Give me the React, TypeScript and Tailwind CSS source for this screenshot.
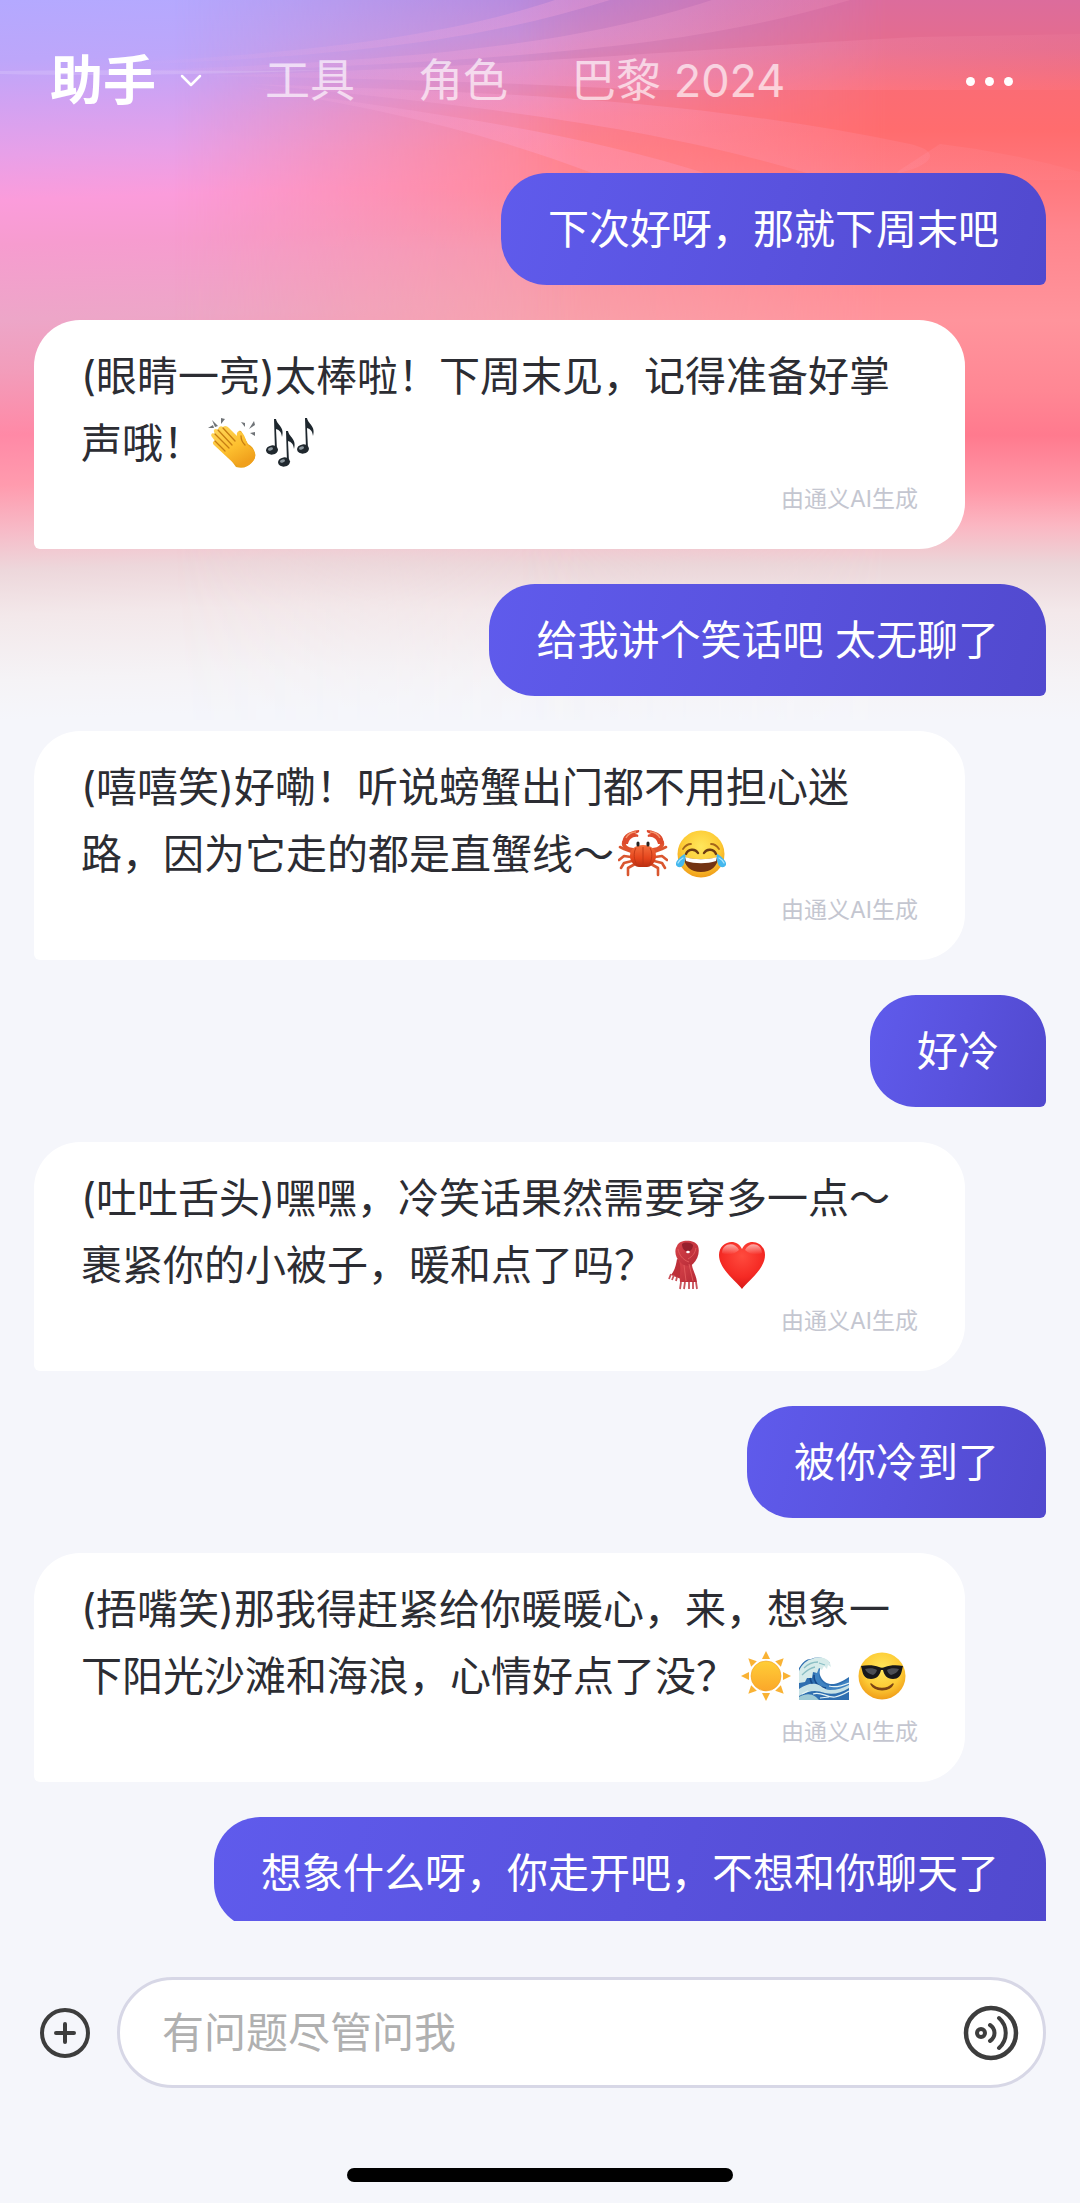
import type { ReactNode } from "react";

const fontStack = "font-['Inter','Noto_Sans_CJK_SC',sans-serif]";

/* ---------- inline emoji ---------- */

function Emoji({ label, children }: { label: string; children: ReactNode }) {
  return (
    <svg
      role="img"
      aria-label={label}
      viewBox="0 0 50 50"
      className="mx-1 inline-block size-[50px] [vertical-align:-10px]"
    >
      {children}
    </svg>
  );
}

function Clap() {
  return (
    <Emoji label="鼓掌">
      <defs>
        <linearGradient id="clap" x1="0" y1="0" x2="0.6" y2="1">
          <stop offset="0" stopColor="#ffd95e" />
          <stop offset="0.6" stopColor="#fdc02f" />
          <stop offset="1" stopColor="#f0a01c" />
        </linearGradient>
      </defs>
      <g fill="#6f7377">
        <path d="M0 10l5-3 1 3z" />
        <path d="M4 2l6 6-3 1z" />
        <path d="M13 0l4 1-4 5z" />
        <path d="M33 4l4 1 0 4z" />
        <path d="M46 3l1 4-6 4z" />
        <path d="M42 15l5-1 0 4z" />
      </g>
      <path
        d="M31 13c2-1 3 1 4 4l5 9c4 2 6 5 7 9 1 3 0 6-3 9-4 5-9 7-16 5l-8-11z"
        fill="#e9a21b"
      />
      <path
        d="M15 9c2-2 4-1 6 1l8 8c-1-4 2-6 4-4 3 2 4 5 6 11 1 4 7 5 8 11 1 6-4 10-8 12-8 2-14-3-19-8L6 27c-2-2-1-4 1-4L4 19c-2-2 0-5 3-3l-1-2c-1-3 2-4 4-2 0-3 3-5 5-3z"
        fill="url(#clap)"
      />
      <path
        d="M10 12l14 15M7 16l14 14M7 23l10 10M15 10l12 13M33 18c0 5 2 7 4 9"
        fill="none"
        stroke="#c77d12"
        strokeWidth="1.3"
        strokeLinecap="round"
      />
    </Emoji>
  );
}

function Note({ x, y }: { x: number; y: number }) {
  return (
    <g transform={`translate(${x} ${y})`}>
      <path
        d="M8 1h2c1 6 9 8 6 18-1-6-3-7-6-8l1 21H9z"
        fill="#1d262d"
      />
      <ellipse cx="6" cy="32" rx="6" ry="4.6" fill="#20282e" transform="rotate(-8 6 32)" />
      <ellipse cx="4.5" cy="31" rx="2.6" ry="1.5" fill="#8c979e" transform="rotate(-18 4.5 31)" />
    </g>
  );
}

function Notes() {
  return (
    <Emoji label="音符">
      <Note x={0} y={0} />
      <Note x={31} y={-1} />
      <Note x={12} y={12} />
    </Emoji>
  );
}

function Crab() {
  return (
    <Emoji label="螃蟹">
      <defs>
        <linearGradient id="crab" x1="0" y1="0" x2="0" y2="1">
          <stop offset="0" stopColor="#f4703f" />
          <stop offset="0.6" stopColor="#e5451c" />
          <stop offset="1" stopColor="#b92e10" />
        </linearGradient>
      </defs>
      <g fill="none" stroke="#d9562f" strokeWidth="2.6" strokeLinecap="round" strokeLinejoin="round">
        <path d="M14 23L6 20 2 18M13 28L6 27 1 31M14 32L6 34 3 39M17 35L10 39 10 46" />
        <path d="M36 23L44 20 48 18M37 28L44 27 49 31M36 32L44 34 47 39M33 35L40 39 40 46" />
      </g>
      <g fill="none" stroke="#e0532e" strokeWidth="4" strokeLinecap="round">
        <path d="M15 21C8 20 5 17 6 13" />
        <path d="M35 21c7-1 10-4 9-8" />
      </g>
      <path d="M5 15C3 8 9 2 21 1c1 2-1 3-4 4 3 0 4 1 3 3-5-1-9 2-10 7z" fill="#dd4a2c" />
      <path d="M45 15C47 8 41 2 29 1c-1 2 1 3 4 4-3 0-4 1-3 3 5-1 9 2 10 7z" fill="#dd4a2c" />
      <path d="M8 9c2-4 6-6 10-6M42 9c-2-4-6-6-10-6" fill="none" stroke="#f5946d" strokeWidth="1.4" />
      <path d="M25 16c8 0 13 4 13 11 0 6-5 11-9 11h-8c-4 0-9-5-9-11 0-7 5-11 13-11z" fill="url(#crab)" />
      <path d="M18 19c-3 5-2 12 1 17M25 18v18M32 19c3 5 2 12-1 17" fill="none" stroke="#bd3714" strokeWidth="0.9" />
      <path d="M20 14v2M30 14v2" stroke="#25201f" strokeWidth="3" strokeLinecap="round" />
    </Emoji>
  );
}

function FaceGradient({ id }: { id: string }) {
  return (
    <defs>
      <radialGradient id={id} cx="0.5" cy="0.35" r="0.68">
        <stop offset="0" stopColor="#ffe75c" />
        <stop offset="0.6" stopColor="#fdcb35" />
        <stop offset="1" stopColor="#ee9715" />
      </radialGradient>
    </defs>
  );
}

function Joy() {
  return (
    <Emoji label="笑哭">
      <FaceGradient id="joy" />
      <circle cx="25" cy="25" r="23.5" fill="url(#joy)" />
      <path d="M7 20c2-3 4-5 8-5M43 20c-2-3-4-5-8-5" fill="none" stroke="#a5661b" strokeWidth="1.8" strokeLinecap="round" />
      <path d="M10 25c2-5 9-6 12-1M28 24c3-5 10-4 12 1" fill="none" stroke="#6d3c13" strokeWidth="2.4" strokeLinecap="round" />
      <path d="M8 28c9 3 25 3 34 0 0 9-7 15-17 15S8 37 8 28z" fill="#733312" />
      <path d="M9 28c9 3 23 3 32 0l-1 4c-9 3-21 3-30 0z" fill="#fff" />
      <path d="M9 25c-1 0-8 5-9 9-1 5 6 6 8 1 1-3 2-7 1-10zM41 25c1 0 8 5 9 9 1 5-6 6-8 1-1-3-2-7-1-10z" fill="#45b8ee" />
      <path d="M7 29c-2 1-4 3-5 5M43 29c2 1 4 3 5 5" fill="none" stroke="#a8e5fc" strokeWidth="1.3" strokeLinecap="round" />
    </Emoji>
  );
}

function Scarf() {
  return (
    <Emoji label="围巾">
      <defs>
        <linearGradient id="scarf" x1="0" y1="0" x2="1" y2="1">
          <stop offset="0" stopColor="#d8434a" />
          <stop offset="1" stopColor="#b52a36" />
        </linearGradient>
      </defs>
      <path d="M18 19l12 4c-3 7-6 11-8 16L12 35c4-5 5-10 6-16z" fill="#bd2f38" />
      <path d="M20 21l13 0c-1 8 4 12 5 21H21c-1-7 2-14-1-21z" fill="url(#scarf)" />
      <path d="M18 6c2-7 18-7 21 0 2 6 0 13-5 18-4 3-9 2-12-1-6-5-7-13-4-17z" fill="url(#scarf)" />
      <path d="M23 4c3-2 8-2 11 1 0 4-3 7-6 7-2-1-5-3-5-8z" fill="#97202c" />
      <ellipse cx="29" cy="12" rx="1.8" ry="1.3" fill="#fff" />
      <path d="M19 9c1 6 5 11 11 13M37 8c-1 5-3 8-8 11M25 25l2 16M30 24l4 17" fill="none" stroke="#e25b5c" strokeWidth="0.9" />
      <path d="M12 34l-2 5M15 35l-2 5M18 37l-1 4M22 42l-1 7M26 42l-1 7M30 42v7M34 42v7M37 42l1 7" stroke="#c9525a" strokeWidth="1.8" />
    </Emoji>
  );
}

function Heart() {
  return (
    <Emoji label="红心">
      <defs>
        <radialGradient id="heart" cx="0.5" cy="0.3" r="0.75">
          <stop offset="0" stopColor="#ff4b3e" />
          <stop offset="0.6" stopColor="#f52a24" />
          <stop offset="1" stopColor="#cf1414" />
        </radialGradient>
        <linearGradient id="shine" x1="0" y1="0" x2="0" y2="1">
          <stop offset="0" stopColor="#fff" stopOpacity="0.6" />
          <stop offset="1" stopColor="#fff" stopOpacity="0" />
        </linearGradient>
      </defs>
      <path d="M25 49C19 41 2 29 2 15 2 1 20-3 25 9 30-3 48 1 48 15c0 14-17 26-23 34z" fill="url(#heart)" />
      <path d="M5 13C5 3 18 1 22 10c-4 4-11 6-17 3zM45 13C45 3 32 1 28 10c4 4 11 6 17 3z" fill="url(#shine)" />
    </Emoji>
  );
}

function Sun() {
  return (
    <Emoji label="太阳">
      <defs>
        <linearGradient id="sun" x1="0" y1="0" x2="0" y2="1">
          <stop offset="0" stopColor="#ffce37" />
          <stop offset="1" stopColor="#fba72a" />
        </linearGradient>
      </defs>
      {[0, 45, 90, 135, 180, 225, 270, 315].map((angle) => (
        <path key={angle} d="M25 0l4 8h-8z" fill="#f9b234" transform={`rotate(${angle} 25 25)`} />
      ))}
      <circle cx="25" cy="25" r="15" fill="url(#sun)" stroke="#f0a125" strokeWidth="0.6" />
    </Emoji>
  );
}

function Wave() {
  return (
    <Emoji label="海浪">
      <path d="M0 17c4-6 7-9 12-9 7-3 15-1 19 4-3 0-6 1-9 4-3 5-1 11 4 15 7 5 17 0 24-5v23H0z" fill="#2f6fb0" />
      <path d="M21 18c-3 6 0 13 7 16 6 3 14-1 22-6v8c-14 7-34 6-35-8 0-5 2-8 6-10z" fill="#3f83c2" />
      <path d="M0 20c3-7 8-11 13-12 7-3 16-1 18 4l1 4-3-2-1 4-3-3-2 4-3-2-2 5-4-1-1 6-5 0-2 4-6 1z" fill="#d6ebea" />
      <path d="M5 17c4-4 9-6 14-6M3 24c5-5 8-7 13-8M20 12l6 2" fill="none" stroke="#8abec4" strokeWidth="1.3" />
      <path d="M11 27c1 5 3 9 8 11M15 24c0 7 4 12 12 13" fill="none" stroke="#174a8b" strokeWidth="1.6" />
      <path d="M0 38c6-4 11-6 17-5 5 1 8 6 14 6 7 0 13-2 19-5v3c-8 5-16 7-24 5-9-3-15-3-26 3z" fill="#c7e2e6" />
      <path d="M14 43c8-3 14 4 22 3 5-1 9-3 14-6M30 35c7 2 13 0 20-3M3 43l6-3M21 47l9-1" fill="none" stroke="#e6f4f4" strokeWidth="1.2" />
      <path d="M0 46c6-3 11-4 17 0l3 3H0z" fill="#9fcbd6" />
    </Emoji>
  );
}

function Cool() {
  return (
    <Emoji label="墨镜笑脸">
      <FaceGradient id="cool" />
      <circle cx="25" cy="25" r="23.5" fill="url(#cool)" />
      <path d="M14 33c6 6 16 6 22 0-3 7-18 8-22 0z" fill="#7a4314" stroke="#7a4314" strokeWidth="1.6" strokeLinejoin="round" />
      <path d="M4 15c6-1 13-1 18 1 2 1 4 1 6 0 5-2 12-2 18-1l-1 4c-1 6-4 9-9 9-6 0-9-4-10-9h-2c-1 5-4 9-10 9-5 0-8-3-9-9z" fill="#17181b" />
      <path d="M8 18c4-1 9-1 12 1-1 3-2 4-4 5-4-1-7-3-8-6zM42 18c-4-1-9-1-12 1 1 3 2 4 4 5 4-1 7-3 8-6z" fill="#4b4e54" />
    </Emoji>
  );
}

/* ---------- message bubbles ---------- */

function UserMessage({ children }: { children: ReactNode }) {
  return (
    <li className="shrink-0 self-end rounded-[46px] rounded-br-[6px] bg-linear-105 from-[#5f5bec] via-[#5952de] to-[#5149ce] px-[47px] py-[23px] text-[41px] leading-[66px] text-white">
      {children}
    </li>
  );
}

function AssistantMessage({ children }: { children: ReactNode }) {
  return (
    <li className="w-[931px] max-w-full shrink-0 rounded-[46px] rounded-bl-[6px] bg-white px-[47px] pt-[23px] pb-[33px] text-[41px] text-[#2c2d33]">
      <p className="leading-[67px]">{children}</p>
      <p className="mt-[5px] text-right text-[23px] leading-[34px] text-[#c4c6d0]">由通义AI生成</p>
    </li>
  );
}

/* ---------- colourful sky behind the header ---------- */

function Backdrop() {
  return (
    <div aria-hidden="true" className="absolute inset-x-0 top-0 -z-10 h-[720px]">
      <div className="absolute inset-0 bg-[linear-gradient(178deg,#b4a9ff_0px,#bda6fa_60px,#d2a2f2_105px,#e8a0e8_155px,#fb9cdb_200px,#f69ccf_245px,#eda6c8_320px,#f29dbb_370px,#ff89a6_435px,#ff9bae_485px,#f7bac7_530px,#edd7db_570px,#f3e8ea_615px,#f5f3f6_680px,#f5f6fb_720px)]" />
      <div className="absolute inset-0 bg-[linear-gradient(180deg,#b886d8_0px,#c98acf_35px,#df85b8_75px,#f8829a_115px,#ff8590_150px,#ff8894_190px,#f898a8_250px,#f8a2ac_320px,#ff8fa0_390px,#ff8098_440px,#ff9aad_490px,#f7bac7_525px,#ebd6d9_565px,#f3e8ea_610px,#f5f3f6_680px,#f5f6fb_720px)] mask-[linear-gradient(90deg,transparent_16%,#000_54%)]" />
      <div className="absolute inset-0 bg-[linear-gradient(180deg,#dc6c9c_0px,#e66c8c_50px,#fb6c74_90px,#ff6c6e_130px,#ff7478_165px,#ff858d_230px,#ff949c_320px,#ff8794_390px,#ff7a8e_435px,#ff98a8_490px,#fbb6c2_525px,#ebd6d9_565px,#f3e8ea_610px,#f5f3f6_680px,#f5f6fb_720px)] mask-[linear-gradient(90deg,transparent_48%,#000_82%)]" />
      <svg viewBox="0 0 1080 180" preserveAspectRatio="none" className="absolute inset-x-0 top-0 h-[180px] w-full">
        <defs>
          <linearGradient id="ray" x1="0" x2="1080" y1="0" y2="0" gradientUnits="userSpaceOnUse">
            <stop offset="0.1" stopColor="#ffb9e6" stopOpacity="0" />
            <stop offset="0.5" stopColor="#ffa9dc" stopOpacity="0.28" />
            <stop offset="1" stopColor="#ffa0b0" stopOpacity="0.08" />
          </linearGradient>
        </defs>
        <g fill="url(#ray)">
          <path d="M60 66C300 55 440 38 555 0H610C470 44 330 58 60 68z" />
          <path d="M100 72C380 62 560 50 712 0H850C700 44 560 60 100 76z" />
          <path d="M200 76C500 68 760 44 920 37L1080 34V90H640C500 82 360 78 200 76z" />
          <path d="M250 84C500 92 700 100 910 144C960 156 910 180 830 180C700 140 560 112 250 84z" />
          <path d="M230 84C400 110 560 126 714 176H600C480 130 380 108 230 84z" />
          <path d="M900 170L940 144Q1010 152 1080 172V180H890z" />
        </g>
        <path d="M0 71C120 69 230 72 330 70C200 75 100 76 0 74z" fill="#fff" opacity="0.14" />
      </svg>
    </div>
  );
}

/* ---------- page ---------- */

const tabs = ["工具", "角色", "巴黎 2024"];

export default function App() {
  return (
    <div className={`relative isolate flex h-screen flex-col overflow-hidden bg-[#f5f6fb] ${fontStack}`}>
      <Backdrop />

      <header className="flex shrink-0 items-center justify-between pt-[45px] pr-[67px] pb-[56px] pl-[50px]">
        <nav aria-label="主导航" className="flex items-center gap-[63px] whitespace-nowrap text-white">
          <button type="button" className="flex items-center gap-[24px] text-[53px] leading-[72px] font-bold">
            助手
            <svg viewBox="0 0 22 14" className="h-[14px] w-[22px]" fill="none" stroke="currentColor" strokeWidth="2.5" strokeLinecap="round" strokeLinejoin="round" aria-hidden="true">
              <path d="M2 2l9 9 9-9" />
            </svg>
          </button>
          {tabs.map((tab) => (
            <button key={tab} type="button" className="text-[45px] leading-[72px] text-white/65">
              {tab}
            </button>
          ))}
        </nav>
        <button type="button" aria-label="更多" className="flex items-center gap-[10px]">
          <span className="size-[9px] rounded-full bg-white" />
          <span className="size-[9px] rounded-full bg-white" />
          <span className="size-[9px] rounded-full bg-white" />
        </button>
      </header>

      <main className="min-h-0 flex-1 overflow-y-auto [scrollbar-width:none]">
        <ul className="flex flex-col gap-[35px] px-[34px]">
          <UserMessage>下次好呀，那就下周末吧</UserMessage>
          <AssistantMessage>
            (眼睛一亮)太棒啦！下周末见，记得准备好掌
            <br />
            声哦！
            <Clap />
            <Notes />
          </AssistantMessage>
          <UserMessage>给我讲个笑话吧 太无聊了</UserMessage>
          <AssistantMessage>
            (嘻嘻笑)好嘞！听说螃蟹出门都不用担心迷
            <br />
            路，因为它走的都是直蟹线～
            <Crab />
            <Joy />
          </AssistantMessage>
          <UserMessage>好冷</UserMessage>
          <AssistantMessage>
            (吐吐舌头)嘿嘿，冷笑话果然需要穿多一点～
            <br />
            裹紧你的小被子，暖和点了吗？
            <Scarf />
            <Heart />
          </AssistantMessage>
          <UserMessage>被你冷到了</UserMessage>
          <AssistantMessage>
            (捂嘴笑)那我得赶紧给你暖暖心，来，想象一
            <br />
            下阳光沙滩和海浪，心情好点了没？
            <Sun />
            <Wave />
            <Cool />
          </AssistantMessage>
          <UserMessage>想象什么呀，你走开吧，不想和你聊天了</UserMessage>
        </ul>
      </main>

      <footer className="flex shrink-0 flex-col items-center px-[34px] pt-[56px] pb-[21px]">
        <form className="flex w-full items-center gap-[26px]" onSubmit={(event) => event.preventDefault()}>
          <button type="button" aria-label="添加" className="shrink-0 pl-[5px] text-[#3d3d3d]">
            <svg viewBox="0 0 52 52" className="size-[52px]" fill="none" stroke="currentColor" strokeWidth="4" strokeLinecap="round" aria-hidden="true">
              <circle cx="26" cy="26" r="23" />
              <path d="M26 17v18M17 26h18" />
            </svg>
          </button>
          <div className="flex h-[111px] min-w-0 flex-1 items-center rounded-full border-[3px] border-[#d7d7e6] bg-white pr-[22px] pl-[42px]">
            <input
              type="text"
              aria-label="消息"
              placeholder="有问题尽管问我"
              className="h-full min-w-0 flex-1 bg-transparent text-[42px] text-[#2c2d33] outline-none placeholder:text-[#b0b0b0]"
            />
            <button type="button" aria-label="语音输入" className="shrink-0 text-[#3d3d3d]">
              <svg viewBox="0 0 60 60" className="size-[60px]" fill="none" stroke="currentColor" strokeWidth="4" strokeLinecap="round" aria-hidden="true">
                <circle cx="30" cy="30" r="25" strokeWidth="4.5" />
                <circle cx="20" cy="30" r="4" />
                <path d="M29 22c6 4 6 12 0 16M38 15c9 8 9 22 0 30" />
              </svg>
            </button>
          </div>
        </form>
        <div className="mt-[80px] h-[14px] w-[386px] rounded-full bg-black" />
      </footer>
    </div>
  );
}
